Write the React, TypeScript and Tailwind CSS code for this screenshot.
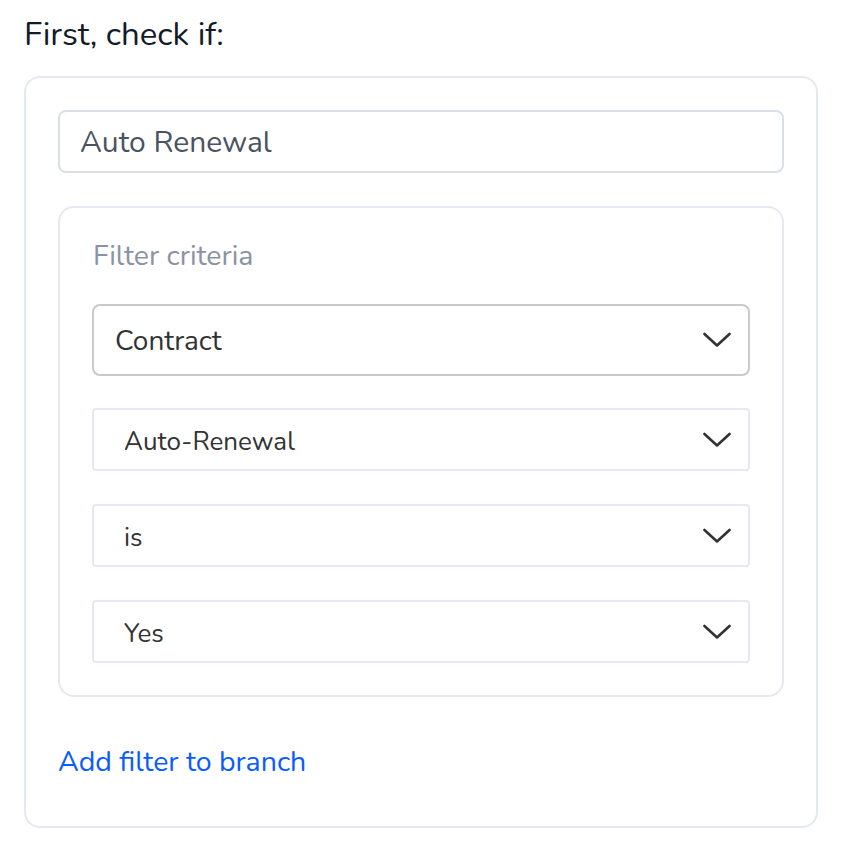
function Chevron() {
  return (
    <svg width="28" height="16" viewBox="0 0 28 16" fill="none" className="shrink-0">
      <polyline
        points="1.5,2 14,13.5 26.5,2"
        stroke="#333333"
        strokeWidth="2.6"
        strokeLinecap="round"
        strokeLinejoin="round"
      />
    </svg>
  );
}

const selects = ['Auto-Renewal', 'is', 'Yes'];

export default function App() {
  return (
    <div className="w-[860px] h-[856px] bg-white px-6 pt-[15px] font-['Nunito','Lato',sans-serif]">
      {/* Title */}
      <h1 className="text-[33px] leading-[40px] text-[#111b29] mb-[21px]">First, check if:</h1>

      {/* Branch card */}
      <div className="w-[794px] border-2 border-[#e4e8f1] rounded-[16px] px-8 pt-8 pb-[44px]">
        <div className="h-[63px] border-2 border-[#dadfe7] rounded-[8px] pl-5 pt-[2px] flex items-center text-[30px] text-[#4a5361]">
          Auto Renewal
        </div>

        <div className="mt-[33px] border-2 border-[#e6e9f2] rounded-[16px] p-8">
          <div className="text-[28.5px] leading-[32px] text-[#8a93a3] pl-px">Filter criteria</div>

          <div className="mt-8 h-[72px] border-2 border-[#c9c9c9] rounded-[8px] pl-[21px] pr-[17px] flex items-center justify-between text-[28px] text-[#333333]">
            <span className="pt-[2px]">Contract</span>
            <Chevron />
          </div>

          {selects.map((s, i) => (
            <div
              key={s}
              className={`${i === 0 ? 'mt-8' : 'mt-[33px]'} h-[63px] border-2 border-[#e6e9f2] rounded-[4px] pl-[30px] pr-[17px] flex items-center justify-between text-[26px] text-[#333333]`}
            >
              <span className="pt-1">{s}</span>
              <Chevron />
            </div>
          ))}
        </div>

        <div className="mt-[45px] text-[28.5px] leading-[40px] text-[#0b5cff]">
          Add filter to branch
        </div>
      </div>
    </div>
  );
}
